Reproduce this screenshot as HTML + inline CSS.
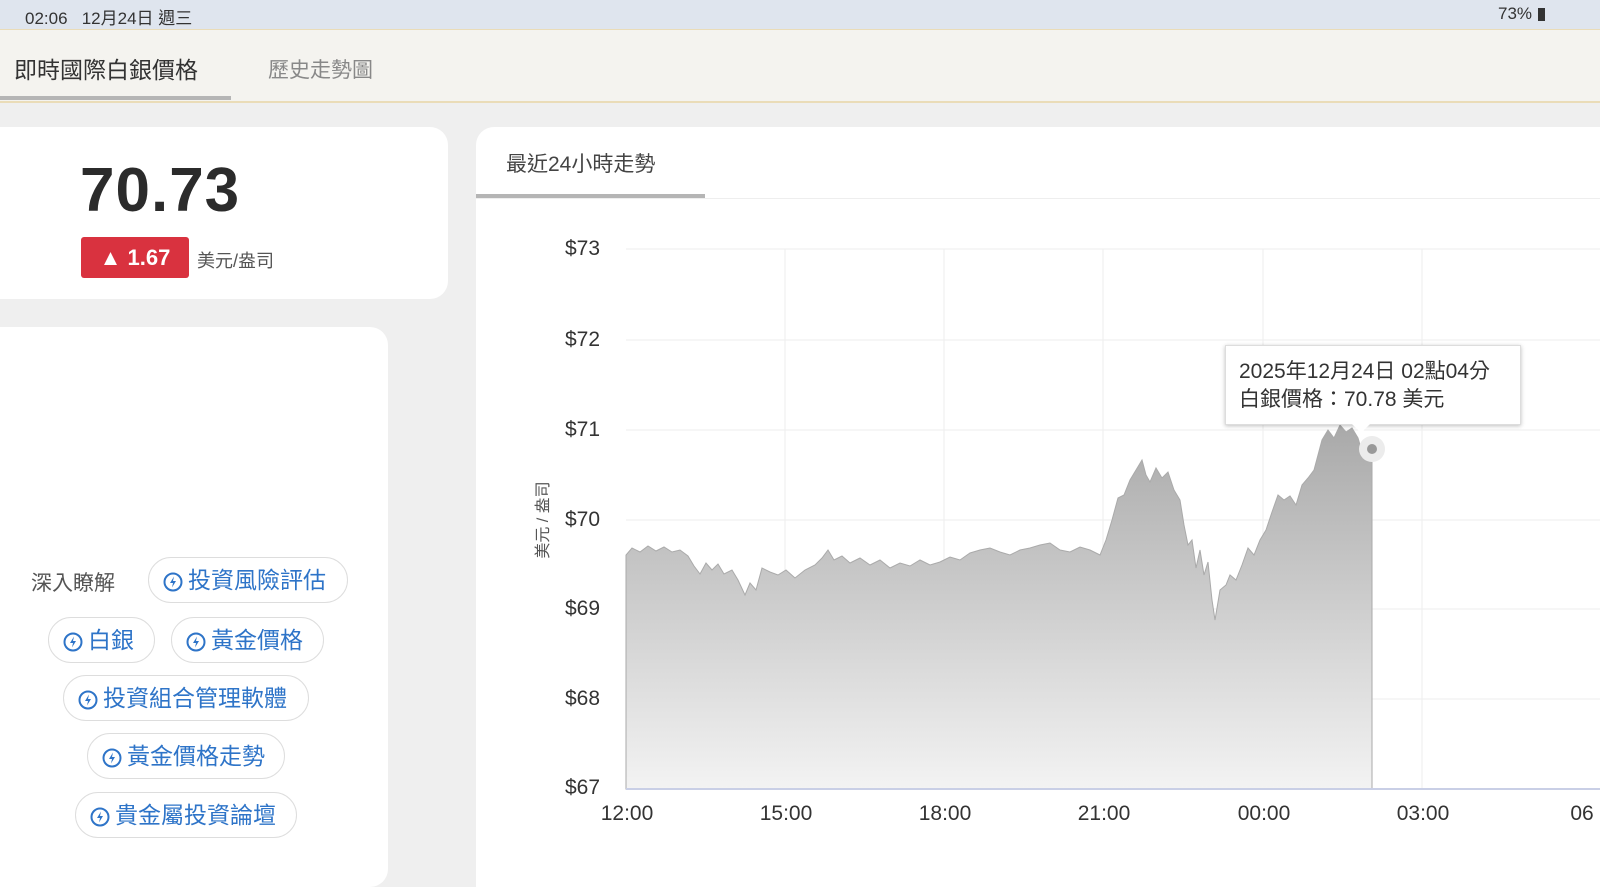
<!DOCTYPE html>
<html><head><meta charset="utf-8"><style>
body{margin:0;width:1600px;height:866px;overflow:hidden;background:#efefef;font-family:"Liberation Sans","Noto Sans CJK TC",sans-serif;position:relative}
.status{position:absolute;left:0;top:0;width:1600px;height:29px;background:#dfe5ee;color:#333;font-size:17px}
.nav{position:absolute;left:0;top:29px;width:1600px;height:71px;background:#f4f3ef;border-top:1px solid #eadcb8;border-bottom:2px solid #eadcb8}
.card{position:absolute;background:#fff;border-radius:18px}
.pill{position:absolute;height:46px;border:1px solid #ddd;border-radius:24px;color:#2e74c8;font-size:23px;line-height:44px;box-sizing:border-box;padding:0 14px 0 14px;white-space:nowrap;background:#fff}
.pill svg{vertical-align:-4px;margin-right:5px}
.yl{position:absolute;left:565px;font-size:21px;color:#333}
.xl{position:absolute;top:802px;font-size:21px;color:#333;transform:translateX(-50%)}
</style></head><body>
<div class="status"><span style="position:absolute;left:25px;top:4px">02:06&nbsp;&nbsp;&nbsp;12月24日 週三</span><span style="position:absolute;left:1498px;top:4px">73%</span><div style="position:absolute;left:1538px;top:8px;width:7px;height:13px;background:#333"></div></div>
<div class="nav">
<div style="position:absolute;left:14px;top:21px;font-size:23px;color:#333">即時國際白銀價格</div>
<div style="position:absolute;left:0;top:66px;width:231px;height:4px;background:#b5b5b5"></div>
<div style="position:absolute;left:268px;top:24px;font-size:21px;color:#888">歷史走勢圖</div>
</div>
<div class="card" style="left:-20px;top:127px;width:468px;height:172px">
<div style="position:absolute;left:100px;top:28px;font-size:62px;color:#2b2b2b;font-weight:bold;letter-spacing:1px">70.73</div>
<div style="position:absolute;left:101px;top:110px;width:108px;height:41px;background:#d9323f;border-radius:3px;color:#fff;font-size:22px;font-weight:bold;line-height:41px;text-align:center">▲ 1.67</div>
<div style="position:absolute;left:217px;top:120px;font-size:18px;color:#555">美元/盎司</div>
</div>
<div class="card" style="left:-20px;top:327px;width:408px;height:560px"></div>
<div style="position:absolute;left:31px;top:567px;font-size:21px;color:#555">深入瞭解</div>
<div class="card" style="left:476px;top:127px;width:1140px;height:760px;border-radius:18px 0 0 0">
<div style="position:absolute;left:30px;top:21px;font-size:21px;color:#444">最近24小時走勢</div>
<div style="position:absolute;left:0;top:67px;width:229px;height:4px;background:#b5b5b5"></div>
<div style="position:absolute;left:0;top:71px;width:1140px;height:1px;background:#eee"></div>
</div>
<svg style="position:absolute;left:0;top:0" width="1600" height="866">
<defs><linearGradient id="g" x1="0" y1="0" x2="0" y2="1"><stop offset="0" stop-color="#a9a9a9"/><stop offset="1" stop-color="#f3f3f3"/></linearGradient></defs>
<g stroke="#eee" stroke-width="1">
<line x1="626" y1="249" x2="1600" y2="249"/><line x1="626" y1="340" x2="1600" y2="340"/><line x1="626" y1="430" x2="1600" y2="430"/><line x1="626" y1="520" x2="1600" y2="520"/><line x1="626" y1="609" x2="1600" y2="609"/><line x1="626" y1="699" x2="1600" y2="699"/>
<line x1="785" y1="249" x2="785" y2="789"/><line x1="944" y1="249" x2="944" y2="789"/><line x1="1103" y1="249" x2="1103" y2="789"/><line x1="1263" y1="249" x2="1263" y2="789"/><line x1="1422" y1="249" x2="1422" y2="789"/>
</g>
<path fill="url(#g)" stroke="#aaa" stroke-width="1" d="M626,789 L626,555 632,548 640,552 648,546 656,551 664,547 672,552 680,550 688,556 694,566 700,574 706,563 712,570 718,564 724,574 732,570 738,580 745,595 750,583 756,590 762,568 770,572 778,575 786,570 795,578 805,570 815,565 822,558 828,550 834,560 842,556 850,563 860,558 870,565 880,560 890,568 900,563 910,566 920,560 930,565 940,562 950,557 960,560 970,553 980,550 990,548 1000,552 1010,555 1020,550 1030,548 1040,545 1050,543 1060,550 1070,552 1080,547 1090,550 1100,555 1106,540 1112,520 1118,498 1124,495 1130,480 1136,470 1142,460 1146,475 1150,482 1156,468 1162,478 1168,472 1174,490 1180,500 1184,525 1188,545 1192,540 1196,568 1200,550 1204,575 1208,562 1212,600 1215,620 1220,590 1226,585 1230,575 1236,580 1242,565 1248,548 1254,555 1260,540 1266,530 1272,512 1278,495 1284,500 1290,496 1296,505 1302,485 1308,478 1314,470 1318,455 1322,440 1328,430 1334,438 1340,425 1346,432 1352,428 1358,438 1363,455 1368,445 1372,449 L1372,789 Z"/>
<line x1="626" y1="789" x2="1600" y2="789" stroke="#c9cfe6" stroke-width="2"/>
<circle cx="1372" cy="449" r="13" fill="#ececec"/><circle cx="1372" cy="449" r="5" fill="#999"/>
<text x="548" y="520" font-size="16" fill="#555" transform="rotate(-90 548 520)" text-anchor="middle" font-family="Liberation Sans,Noto Sans CJK TC,sans-serif">美元 / 盎司</text>
</svg>
<div class="yl" style="top:237px">$73</div><div class="yl" style="top:328px">$72</div><div class="yl" style="top:418px">$71</div><div class="yl" style="top:508px">$70</div><div class="yl" style="top:597px">$69</div><div class="yl" style="top:687px">$68</div><div class="yl" style="top:776px">$67</div>
<div class="xl" style="left:627px">12:00</div><div class="xl" style="left:786px">15:00</div><div class="xl" style="left:945px">18:00</div><div class="xl" style="left:1104px">21:00</div><div class="xl" style="left:1264px">00:00</div><div class="xl" style="left:1423px">03:00</div><div class="xl" style="left:1582px">06</div>
<div style="position:absolute;left:1225px;top:345px;width:296px;height:80px;background:#fff;border:1px solid #ddd;box-shadow:0 1px 4px rgba(0,0,0,.25);box-sizing:border-box;padding:12px 13px;font-size:21px;line-height:28px;color:#333">2025年12月24日 02點04分<br>白銀價格：70.78 美元</div>
<div style="position:absolute;left:1352px;top:424px;width:0;height:0;border-left:9px solid transparent;border-right:9px solid transparent;border-top:9px solid #fff"></div>
<div class="pill" style="left:148px;top:557px;width:200px"><svg width="20" height="20" viewBox="0 0 20 20"><circle cx="10" cy="10" r="8.5" fill="none" stroke="#2e74c8" stroke-width="2"/><path d="M11 4.5L7 11h3l-1 4.5 4-6.5h-3z" fill="#2e74c8"/></svg>投資風險評估</div>
<div class="pill" style="left:48px;top:617px;width:107px"><svg width="20" height="20" viewBox="0 0 20 20"><circle cx="10" cy="10" r="8.5" fill="none" stroke="#2e74c8" stroke-width="2"/><path d="M11 4.5L7 11h3l-1 4.5 4-6.5h-3z" fill="#2e74c8"/></svg>白銀</div>
<div class="pill" style="left:171px;top:617px;width:153px"><svg width="20" height="20" viewBox="0 0 20 20"><circle cx="10" cy="10" r="8.5" fill="none" stroke="#2e74c8" stroke-width="2"/><path d="M11 4.5L7 11h3l-1 4.5 4-6.5h-3z" fill="#2e74c8"/></svg>黃金價格</div>
<div class="pill" style="left:63px;top:675px;width:246px"><svg width="20" height="20" viewBox="0 0 20 20"><circle cx="10" cy="10" r="8.5" fill="none" stroke="#2e74c8" stroke-width="2"/><path d="M11 4.5L7 11h3l-1 4.5 4-6.5h-3z" fill="#2e74c8"/></svg>投資組合管理軟體</div>
<div class="pill" style="left:87px;top:733px;width:198px"><svg width="20" height="20" viewBox="0 0 20 20"><circle cx="10" cy="10" r="8.5" fill="none" stroke="#2e74c8" stroke-width="2"/><path d="M11 4.5L7 11h3l-1 4.5 4-6.5h-3z" fill="#2e74c8"/></svg>黃金價格走勢</div>
<div class="pill" style="left:75px;top:792px;width:222px"><svg width="20" height="20" viewBox="0 0 20 20"><circle cx="10" cy="10" r="8.5" fill="none" stroke="#2e74c8" stroke-width="2"/><path d="M11 4.5L7 11h3l-1 4.5 4-6.5h-3z" fill="#2e74c8"/></svg>貴金屬投資論壇</div>
</body></html>
